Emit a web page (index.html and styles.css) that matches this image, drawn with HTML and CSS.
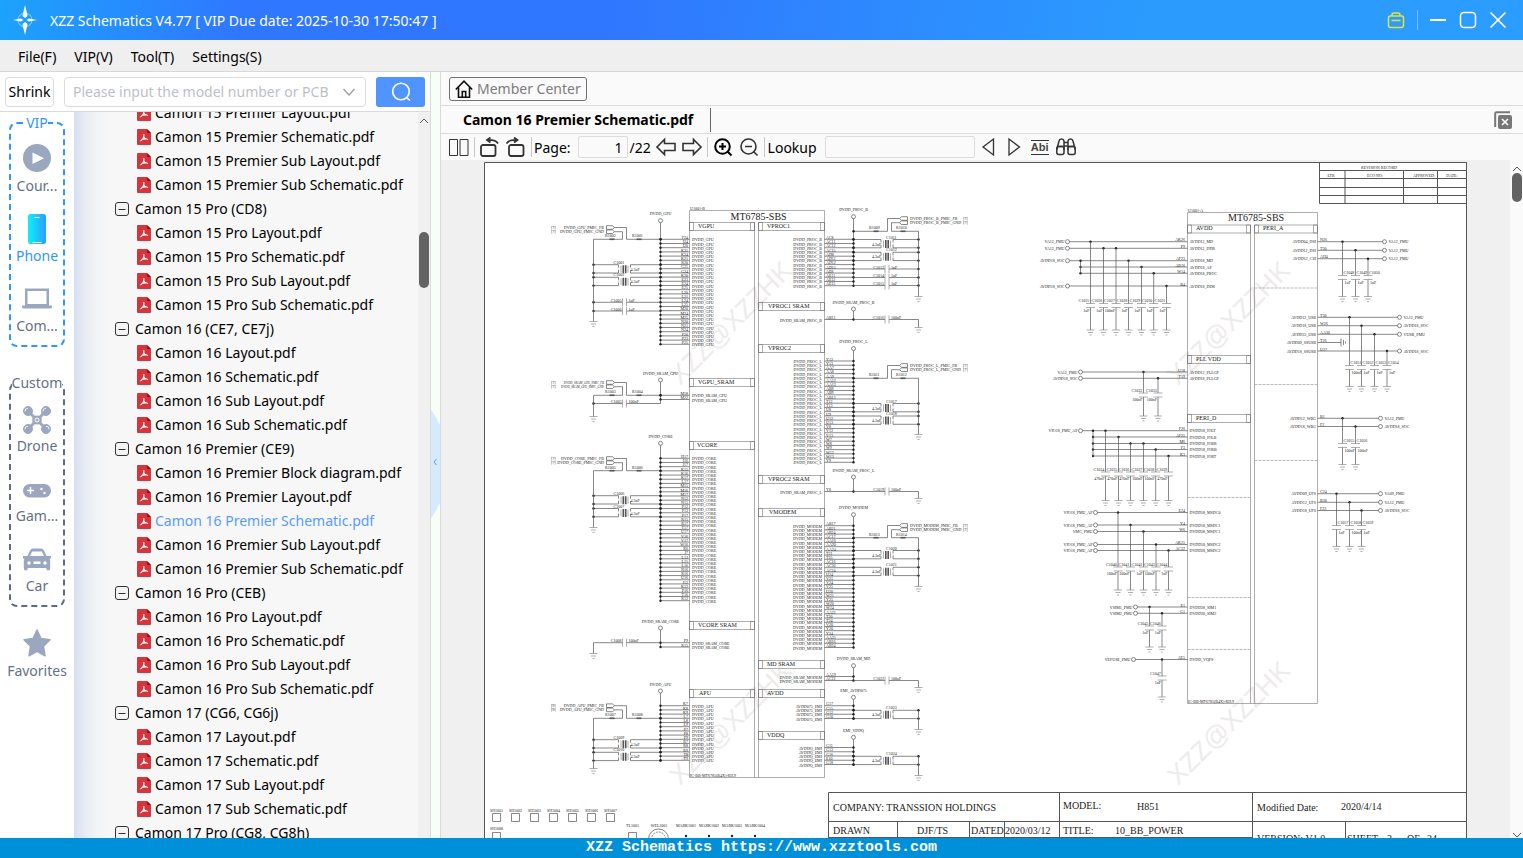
FILE: index.html
```html
<!DOCTYPE html>
<html lang="en">

<head>
  <meta charset="UTF-8">
  <meta name="viewport" content="width=device-width, initial-scale=1.0">
  <title>XZZ Schematics</title>
  <link rel="stylesheet" href="styles.css">
</head>

<body>
  <header class="titlebar">
    <svg class="logo" viewBox="0 0 24 30">
      <circle cx="12" cy="15" r="7" fill="none" stroke="#8fd0ff" stroke-width="1" />
      <path d="M12 0l2.600 11-2.600 2-2.600-2zM12 30l2.600-11-2.600-2-2.600 2zM0 15l8-1.500 2.500 1.500-2.500 1.500zM24 15l-8-1.500-2.500 1.500 2.500 1.500z" fill="#fff" />
    </svg>
    <span class="title">XZZ Schematics V4.77 [ VIP Due date: 2025-10-30 17:50:47 ]</span>
    <div class="window-buttons">
      <button class="win" aria-label="Toolbox">
        <svg width="18" height="18" viewBox="0 0 18 18" fill="none" stroke="#e2e43c" stroke-width="1.500">
          <rect x="1.500" y="5" width="15" height="11.500" rx="2" />
          <path d="M5 5V4q0-2 2-2h4q2 0 2 2v1M4.500 9.500h9" />
        </svg>
      </button>
      <span class="win-line"></span>
      <button class="win" aria-label="Minimize">
        <svg width="18" height="18" viewBox="0 0 18 18"><path d="M1 9h16" stroke="#fff" stroke-width="2" /></svg>
      </button>
      <button class="win" aria-label="Maximize">
        <svg width="18" height="18" viewBox="0 0 18 18"><rect x="1.500" y="1.500" width="15" height="15" rx="3.500" fill="none" stroke="#fff" stroke-width="1.500" /></svg>
      </button>
      <button class="win" aria-label="Close">
        <svg width="18" height="18" viewBox="0 0 18 18"><path d="M1.500 1.500l15 15M16.500 1.500l-15 15" stroke="#fff" stroke-width="1.700" /></svg>
      </button>
    </div>
  </header>

  <nav class="menu">
    <button>File(F)</button>
    <button>VIP(V)</button>
    <button>Tool(T)</button>
    <button>Settings(S)</button>
  </nav>

  <main class="main">
    <section class="left">
      <form class="search">
        <button type="button" class="shrink">Shrink</button>
        <div class="combo">
          <input type="text" aria-label="Model number" placeholder="Please input the model number or PCB">
          <svg width="14" height="14" viewBox="0 0 14 14"><path d="M1.500 4L7 10l5.500-6" fill="none" stroke="#9a9fa8" stroke-width="1.400" /></svg>
        </div>
        <button type="button" class="go" aria-label="Search">
          <svg width="20" height="20" viewBox="0 0 20 20" fill="none" stroke="#fff" stroke-width="1.600">
            <circle cx="10" cy="9.500" r="8.300" />
            <path d="M15.500 15.500l3.500 3" />
          </svg>
        </button>
      </form>

      <div class="browser">
        <nav class="side">
          <fieldset class="group vip">
            <legend>VIP</legend>
            <a class="item" href="#course">
              <svg viewBox="0 0 28 28"><circle cx="14" cy="14" r="14" /><path d="M9.500 8.500v11.500l11.500-5.700z" fill="#fff" /></svg>
              Cour...
            </a>
            <a class="item on" href="#phone">
              <svg viewBox="0 0 28 28">
                <defs>
                  <linearGradient id="ph"><stop offset="0" stop-color="#0ff0fb" /><stop offset="1" stop-color="#2b9dfb" /></linearGradient>
                </defs>
                <rect x="5" y="0" width="18" height="30" rx="2.500" fill="url(#ph)" />
                <path d="M11.500 3.500h5M9.500 28.500h9" stroke="#fff" stroke-width="1" />
              </svg>
              Phone
            </a>
            <a class="item" href="#computer">
              <svg viewBox="0 0 28 28">
                <path d="M2 4.500h24v18H2zM4.500 7v13h19V7z" fill-rule="evenodd" />
                <path d="M-1 21.500h30v1.500q0 1.500-2 1.500H1q-2 0-2-1.500z" />
              </svg>
              Com...
            </a>
          </fieldset>

          <fieldset class="group custom">
            <legend>Custom</legend>
            <a class="item" href="#drone">
              <svg viewBox="0 0 28 28">
                <path d="M5 5l6 6v6l-6 6M23 5l-6 6v6l6 6" fill="none" stroke="#9ba7bf" stroke-width="3" />
                <circle cx="14" cy="14" r="4.500" />
                <circle cx="14" cy="14" r="2" fill="none" stroke="#fff" stroke-width="1" />
                <g stroke="#9ba7bf" stroke-width="1">
                  <circle cx="5" cy="5" r="4.500" /><circle cx="23" cy="5" r="4.500" />
                  <circle cx="5" cy="23" r="4.500" /><circle cx="23" cy="23" r="4.500" />
                </g>
                <path d="M2 5.500a3 3 0 0 1 3-3.300M20 5.500a3 3 0 0 1 3-3.300M2 23.500a3 3 0 0 1 3-3.300M26 23.500a3 3 0 0 0-3-3.300" fill="none" stroke="#fff" stroke-width=".8" />
              </svg>
              Drone
            </a>
            <a class="item" href="#game">
              <svg viewBox="0 0 28 28">
                <rect x="0" y="8" width="28" height="13.500" rx="6.500" />
                <path d="M4 14.500h7M7.500 11v7" stroke="#fff" stroke-width="1.500" />
                <circle cx="18.500" cy="13" r="1.200" fill="#fff" /><circle cx="21.500" cy="17" r="1.200" fill="#fff" />
              </svg>
              Gam...
            </a>
            <a class="item" href="#car">
              <svg viewBox="0 0 28 28">
                <path d="M4.500 10L7 4.500Q8 2.500 10 2.500h8q2 0 3 2L23.500 10H28v2.500h-1.500q.700 1 .700 3V22q0 2.500-2 2.500t-2-2.500H4.800q0 2.500-2 2.500t-2-2.500v-6.500q0-2 .700-3H0V10zM7 10h14l-2.200-4.500h-9.600z" fill-rule="evenodd" />
                <path d="M10.500 15.500h7v2.500h-7z" fill="#fff" />
                <circle cx="6" cy="17" r="1.700" fill="#fff" /><circle cx="22" cy="17" r="1.700" fill="#fff" />
              </svg>
              Car
            </a>
          </fieldset>

          <a class="item favorites" href="#favorites">
            <svg viewBox="0 0 28 28"><path d="M14 1l4 8.500 9 1.200-6.500 6.600 1.500 9.500-8-4.500-8 4.500 1.500-9.500L1 10.700l9-1.200z" stroke="#9ba7bf" stroke-width="1.500" stroke-linejoin="round" /></svg>
            Favorites
          </a>
        </nav>

        <div class="tree">
          <ul id="tree"></ul>
        </div>
        <div class="scroll tree-scroll">
          <svg class="caret" viewBox="0 0 10 6"><path d="M1 5l4-4 4 4" /></svg>
          <span class="thumb"></span>
        </div>
      </div>
    </section>

    <div class="splitter">
      <button class="handle" aria-label="Collapse">
        <svg width="9" height="110" viewBox="0 0 9 110">
          <path d="M0 0l9 16v78L0 110z" fill="#d6eafd" />
          <path d="M5.500 50L3 53l2.500 3" fill="none" stroke="#5aa2e8" stroke-width="1" />
        </svg>
      </button>
    </div>

    <section class="right">
      <div class="member-row">
        <button class="member">
          <svg width="18" height="18" viewBox="0 0 18 18" fill="none" stroke="#111" stroke-width="1.600">
            <path d="M.800 9.500L9 1.200l8.200 8.300M3.500 7.500v9.700h11V7.500M7.300 17v-5.500h3.400V17" />
          </svg>
          Member Center
        </button>
      </div>

      <div class="tabs">
        <button class="tab">Camon 16 Premier Schematic.pdf</button>
        <button class="close-all" aria-label="Close all">
          <svg width="18" height="18" viewBox="0 0 18 18">
            <path d="M1.200 16V2.500q0-1.300 1.300-1.300H16" fill="none" stroke="#777" stroke-width="2" />
            <rect x="4" y="4" width="14" height="14" rx="2" fill="#777" />
            <path d="M8 8l6 6M14 8l-6 6" stroke="#fff" stroke-width="1.600" />
          </svg>
        </button>
      </div>

      <div class="toolbar">
        <button class="tool" aria-label="Two pages">
          <svg viewBox="0 0 20 20"><path d="M.500 2.500h8v16h-8zM11 2.500h8v16h-8z" /></svg>
        </button>
        <span class="sep"></span>
        <button class="tool" aria-label="Rotate left">
          <svg viewBox="0 0 20 20" stroke-width="1.800"><rect x="1" y="8" width="14.500" height="11" rx="2" /><path d="M18 6.500Q15.500 2.500 7.500 3M10.500 .500L7 3l3.500 2.500" /></svg>
        </button>
        <button class="tool" aria-label="Rotate right">
          <svg viewBox="0 0 20 20" stroke-width="1.800"><rect x="3" y="8" width="14.500" height="11" rx="2" /><path d="M.500 6.500Q3 2.500 11 3M8 .500L11.500 3 8 5.500" /></svg>
        </button>
        <span class="sep"></span>
        <label for="page">Page:</label>
        <input id="page" class="page" type="text" value="1">
        <span class="total">/22</span>
        <button class="tool" aria-label="Previous page">
          <svg viewBox="0 0 20 20" stroke-width="1.600"><path d="M1 10l7.500-7.500v4H19v7H8.500v4z" /></svg>
        </button>
        <button class="tool" aria-label="Next page">
          <svg viewBox="0 0 20 20" stroke-width="1.600"><path d="M19 10l-7.500-7.500v4H1v7h10.500v4z" /></svg>
        </button>
        <span class="sep"></span>
        <button class="tool strong" aria-label="Zoom in">
          <svg viewBox="0 0 20 20"><circle cx="9.500" cy="9.500" r="7.300" /><path d="M14.500 14.500l4 4M6 9.500h7M9.500 6v7" /></svg>
        </button>
        <button class="tool" aria-label="Zoom out">
          <svg viewBox="0 0 20 20" stroke-width="1.600"><circle cx="9.500" cy="9.500" r="7.500" /><path d="M14.500 14.500l4 4M6 9.500h7" /></svg>
        </button>
        <span class="sep"></span>
        <label for="lookup">Lookup</label>
        <input id="lookup" class="lookup" type="text">
        <button class="tool" aria-label="Find previous">
          <svg viewBox="0 0 20 20" stroke-width="1.300"><path d="M15.500 2v16L5 10z" /></svg>
        </button>
        <button class="tool" aria-label="Find next">
          <svg viewBox="0 0 20 20" stroke-width="1.300"><path d="M5 2v16l10.500-8z" /></svg>
        </button>
        <button class="tool abi">Abi</button>
        <button class="tool" aria-label="Find">
          <svg viewBox="0 0 20 20" stroke-width="1.500">
            <path d="M.800 12.500L3 4q.400-2 2.500-2T8 4v9M12 13V4q.400-2 2.500-2T17 4l2.200 8.500M8 5.500h4M8 9h4M2 9.500h6M12 9.500h6" />
            <rect x=".8" y="9.500" width="7.200" height="8" rx="2" /><rect x="12" y="9.500" width="7.200" height="8" rx="2" />
          </svg>
        </button>
      </div>

      <div class="viewer">
        <div class="canvas">
          <svg id="sheet" class="sheet" viewBox="484 162 983 690"></svg>
        </div>
        <div class="scroll page-scroll">
          <svg class="caret" viewBox="0 0 10 6"><path d="M1 5l4-4 4 4" /></svg>
          <span class="thumb"></span>
          <svg class="caret down" viewBox="0 0 10 6"><path d="M1 1l4 4 4-4" /></svg>
        </div>
      </div>
    </section>
  </main>

  <footer class="status">XZZ Schematics https://www.xzztools.com</footer>

  <script src="script.js"></script>
</body>

</html>
```

FILE: styles.css
```css
html {
  box-sizing: border-box;
  font-family: "Noto Sans", "Open Sans", sans-serif;
  font-size: 14px;
}

*,
*::before,
*::after {
  box-sizing: inherit;
}

body {
  display: flex;
  flex-direction: column;
  height: 100vh;
  margin: 0;
  overflow: hidden;
  color: #000;
  background-color: #fafafa;
}

button,
input {
  font: inherit;
  color: inherit;
}

button {
  padding: 0;
  border: 0;
  background: none;
}

a {
  color: inherit;
  text-decoration: none;
}

svg {
  display: block;
  flex: none;
}

/* title bar */
.titlebar {
  display: flex;
  align-items: center;
  flex: none;
  height: 40px;
  padding: 0 16px 0 13px;
  color: #fff;
  background: linear-gradient(100deg, #1ca3fb 0, #3077ff 16%, #3077ff 40%, #2b9bfe 75%, #2b9dfe 100%);
}

.logo {
  width: 24px;
  height: 30px;
}

.title {
  margin-left: 13px;
}

.window-buttons {
  display: flex;
  align-items: center;
  gap: 12px;
  margin-left: auto;
}

.win-line {
  width: 1px;
  height: 20px;
  margin-right: -1px;
  background-color: #7fc3ff;
}

/* menu */
.menu {
  display: flex;
  align-items: center;
  flex: none;
  gap: 18px;
  height: 32px;
  padding: 2px 18px 0;
  border-bottom: 1px solid #d9d9d9;
  background-color: #efefef;
}

.main {
  display: flex;
  flex: 1;
  min-height: 0;
}

/* left panel */
.left {
  display: flex;
  flex-direction: column;
  flex: none;
  width: 431px;
  border-right: 1px solid #dadada;
  background-color: #fff;
}

.search {
  display: flex;
  align-items: center;
  flex: none;
  gap: 10px;
  height: 40px;
  padding: 0 5px;
  border-bottom: 1px solid #dadada;
}

.shrink {
  width: 49px;
  height: 30px;
  border: 1px solid #dadada;
  border-radius: 4px;
}

.combo {
  display: flex;
  align-items: center;
  flex: 1;
  min-width: 0;
  height: 30px;
  padding: 0 9px 0 8px;
  border: 1px solid #dadada;
  border-radius: 4px;
}

.combo input {
  flex: 1;
  min-width: 0;
  padding: 0;
  border: 0;
  background: none;
}

.combo input::placeholder {
  color: #bcbfc6;
}

.go {
  display: flex;
  align-items: center;
  justify-content: center;
  width: 49px;
  height: 30px;
  border-radius: 3px;
  background-color: #5094ff;
}

.browser {
  display: flex;
  flex: 1;
  min-height: 0;
}

.side {
  flex: none;
  width: 74px;
  padding: 2px 9px 0;
  overflow: hidden;
  color: #667085;
}

.group {
  min-width: 0;
  margin: 0 0 27px;
  padding: 0 0 3px;
  border: 2px dashed #5f6b80;
  border-radius: 8px;
}

.group legend {
  margin: 0 auto;
  padding: 0;
  line-height: 18px;
}

.vip {
  border-color: #2f97f7;
}

.vip legend,
.on {
  color: #2f97f7;
}

.item {
  display: flex;
  flex-direction: column;
  align-items: center;
  gap: 4px;
  height: 70px;
  padding-top: 12px;
  line-height: 20px;
  white-space: nowrap;
}

.item svg {
  width: 28px;
  height: 28px;
  fill: #9ba7bf;
  overflow: visible;
}

.custom .item {
  gap: 2px;
  padding-top: 14px;
}

.favorites {
  margin-top: -17px;
}

.tree {
  flex: 1;
  min-width: 0;
  overflow: hidden;
  background: linear-gradient(90deg, #d6e0f1 0, #e9ecf2 12px, #f3f4f6 24px, #f7f7f7 36px);
}

/* list is scrolled half a row down */
.tree ul {
  margin: -11px 0 0;
  padding: 0;
  list-style: none;
}

.tree li {
  display: flex;
  align-items: center;
  height: 24px;
  line-height: 24px;
  white-space: nowrap;
}

.folder {
  gap: 6px;
  padding-left: 41px;
}

.file {
  gap: 4px;
  padding-left: 63px;
}

.selected {
  color: #5a9bff;
}

/* scroll bars */
.scroll {
  display: flex;
  flex-direction: column;
  align-items: center;
  flex: none;
}

.caret {
  width: 10px;
  height: 6px;
  fill: none;
  stroke: #555;
}

.thumb {
  width: 10px;
  border-radius: 5px;
  background-color: #636363;
}

.tree-scroll {
  width: 12px;
  padding-top: 6px;
  background-color: #f0f0f0;
}

.tree-scroll .thumb {
  height: 56px;
  margin-top: 108px;
}

.page-scroll {
  width: 13px;
  padding-top: 6px;
}

.page-scroll .thumb {
  height: 29px;
  margin-top: 1px;
}

.down {
  margin-top: auto;
}

/* splitter */
.splitter {
  display: flex;
  align-items: center;
  flex: none;
  width: 10px;
  padding-top: 18px;
  border-right: 1px solid #dadada;
  background-color: #f7fdf7;
}

/* right panel */
.right {
  display: flex;
  flex-direction: column;
  flex: 1;
  min-width: 0;
}

.member-row {
  display: flex;
  align-items: center;
  flex: none;
  height: 34px;
  padding-left: 8px;
  border-bottom: 1px solid #dadada;
}

.member {
  display: flex;
  align-items: center;
  gap: 4px;
  height: 24px;
  padding: 0 5px;
  border: 1px solid #707070;
  border-radius: 3px;
  color: #7d7d7d;
}

.tabs {
  display: flex;
  align-items: center;
  justify-content: space-between;
  flex: none;
  height: 28px;
  padding-right: 11px;
  border-bottom: 1px solid #dadada;
}

.tab {
  height: 24px;
  padding: 0 17px 0 22px;
  border-right: 1px solid #666;
  font-weight: bold;
}

.toolbar {
  display: flex;
  align-items: center;
  flex: none;
  height: 26px;
  padding-left: 5px;
}

.tool {
  display: flex;
  justify-content: center;
  width: 26px;
}

.tool svg {
  width: 20px;
  height: 20px;
  fill: none;
  stroke: #333;
}

.strong svg {
  stroke: #000;
  stroke-width: 2;
}

.sep {
  width: 1px;
  height: 20px;
  margin: 0 2px;
  background-color: #c8c8c8;
}

.toolbar input {
  height: 22px;
  border: 1px solid #dcdcdc;
  border-radius: 2px;
  background: none;
}

.page {
  width: 50px;
  margin: 0 2px 0 7px;
  padding: 0 4px;
  text-align: right;
}

.toolbar .lookup {
  width: 150px;
  margin-left: 8px;
}

.total {
  width: 23px;
}

.toolbar label[for="lookup"] {
  margin-left: 1px;
}

.abi {
  width: 18px;
  margin: 0 4px;
  border-top: 1px solid #333;
  border-bottom: 1px solid #333;
  font: bold 11px/13px "Liberation Sans", sans-serif;
  color: #444;
}

.viewer {
  display: flex;
  flex: 1;
  min-height: 0;
}

.canvas {
  flex: 1;
  min-width: 0;
  padding: 2px 43px 0;
  overflow: hidden;
  background-color: #f0f0f0;
}

/* schematic sheet */
.sheet {
  width: 100%;
  height: auto;
  background-color: #fff;
  fill: #222;
  font-family: "Liberation Serif", serif;
}

.sheet .wire {
  fill: none;
  stroke: #555;
  stroke-width: .7;
}

.sheet .thin {
  fill: none;
  stroke: #777;
  stroke-width: .6;
}

.sheet .dash {
  stroke: #aaa;
  stroke-width: .8;
  stroke-dasharray: 3 1;
}

.sheet .fat {
  stroke: #555;
  stroke-width: 1.6;
}

.sheet .frame {
  fill: none;
  stroke: #555;
  stroke-width: 1;
}

.sheet .node {
  fill: #222;
}

.sheet .mark {
  font-family: "Liberation Sans", sans-serif;
  fill: #eeebeb;
}

/* status bar */
.status {
  flex: none;
  height: 20px;
  color: #fff;
  background-color: #0090da;
  font: bold 15px/20px "Liberation Mono", monospace;
  text-align: center;
}
```

FILE: script.js
```js
const d = document,
  $tree = d.getElementById("tree"),
  $sheet = d.getElementById("sheet");

/* ---------- file tree ---------- */
const PARTS = ["Layout", "Schematic", "Sub Layout", "Sub Schematic"];
const folders = [
  { base: "Camon 15 Premier", parts: PARTS },
  { name: "Camon 15 Pro (CD8)", base: "Camon 15 Pro", parts: PARTS },
  { name: "Camon 16 (CE7, CE7j)", base: "Camon 16", parts: PARTS },
  { name: "Camon 16 Premier (CE9)", base: "Camon 16 Premier", parts: ["Block diagram", ...PARTS] },
  { name: "Camon 16 Pro (CEB)", base: "Camon 16 Pro", parts: PARTS },
  { name: "Camon 17 (CG6, CG6j)", base: "Camon 17", parts: PARTS },
  { name: "Camon 17 Pro (CG8, CG8h)", base: "Camon 17 Pro", parts: [] }
];
const current = "Camon 16 Premier Schematic.pdf";

const minusIcon = `<svg width="14" height="14" viewBox="0 0 14 14" fill="#f3f3f3" stroke="#333">
  <rect x=".5" y=".5" width="13" height="13" rx="2.5"/><path d="M3.500 7.500h7"/></svg>`;
const pdfIcon = `<svg width="14" height="16" viewBox="0 0 14 16">
  <path d="M1 0h9l4 4v11q0 1-1 1H1q-1 0-1-1V1q0-1 1-1z" fill="#d2363f"/>
  <path d="M10 0l4 4h-4z" fill="#8f1219"/>
  <path d="M6.800 5v2.500q0 2-3.300 4.500M6.800 8q1 2 4.200 2.500M5.500 10.300l4-.500" fill="none" stroke="#fff" stroke-width="1.100"/></svg>`;

folders.forEach(f => {
  let rows = f.name ? `<li class="folder"><button aria-label="Collapse">${minusIcon}</button>${f.name}</li>` : "";
  f.parts.forEach(p => {
    const file = `${f.base} ${p}.pdf`;
    rows += `<li class="file${file === current ? " selected" : ""}">${pdfIcon}<a href="#">${file}</a></li>`;
  });
  $tree.innerHTML += rows;
});

/* ---------- schematic sheet ---------- */
let out = "";
const path = (p, cls = "wire") => out += `<path class="${cls}" d="${p}"/>`;
const text = (x, y, s, size = 4, anchor = "start") =>
  out += `<text x="${x}" y="${y}" font-size="${size}" text-anchor="${anchor}">${s}</text>`;
const dot = (x, y) => out += `<circle class="node" cx="${x}" cy="${y}" r="1.2"/>`;
const ring = (x, y) => out += `<circle class="wire" cx="${x}" cy="${y}" r="2"/>`;
const box = (x, y, w, h, cls = "thin") => path(`M${x} ${y}h${w}v${h}h${-w}z`, cls);
const ground = (x, y) => path(`M${x - 4} ${y}h8M${x - 2.5} ${y + 2.500}h5M${x - 1} ${y + 5}h2`, "thin");

function watermark(x, y) {
  out += `<text class="mark" x="${x}" y="${y}" font-size="26" transform="rotate(-45 ${x} ${y})">XZZ@XZZHK</text>`;
}

function section(x, y, w, label, tx) {
  box(x, y, w, 8);
  box(x, y, 4, 8);
  box(x + w - 4, y, 4, 8);
  text(tx, y + 5, label, 6);
}

// electrolytic between two rows, plates in the middle
function bigCap(x1, x2, cx, y, name, flip) {
  path(`M${x1} ${y}H${cx - 6}v3M${cx + 6} ${y + 3}V${y}H${x2}M${x1} ${y + 8.300}H${cx - 6}v-3M${cx + 6} ${y + 5.300}v3H${x2}`);
  path(`M${cx - 1.200} ${y + .500}v8M${cx + 1.200} ${y + .500}v8`, "fat");
  path(`M${cx - 3.500} ${y + 1}v7M${cx + 3.500} ${y + 1}v7`, "thin");
  text(flip ? cx - 1 : cx - 11, y - 1, name);
  text(flip ? cx - 15 : cx + 6, y + 6, "4.3uF");
  text(flip ? cx + 5 : cx - 7, y + 6, "+");
  [x1, x2].forEach(x => { dot(x, y); dot(x, y + 8.300); });
}

function smallCap(x1, x2, cx, y, name, value) {
  path(`M${x1} ${y}H${cx - 2}M${cx + 2} ${y}H${x2}`);
  path(`M${cx - 2} ${y - 4}v8M${cx + 2} ${y - 4}v8`, "thin");
  text(cx - 3, y - .500, name, 4, "end");
  text(cx + 4, y - .500, value);
}

function resistor(x, y, name) {
  path(`M${x - 2.500} ${y}h5`, "fat");
  text(x - 7, y - 2, name);
}

// rail with its pins on the left or right edge of chip B
function bank(side, o) {
  const left = side === "left", rail = left ? 660.5 : 853.5, edge = left ? 689.5 : 824.5;
  const step = o.rows.length > 1 ? (o.to - o.from) / (o.rows.length - 1) : 0;
  ring(rail, o.ring);
  text(rail, o.ring - 5.500, o.rail || o.net, 4, "middle");
  path(`M${rail} ${o.ring + 2}V${o.to}`);
  o.rows.forEach((pin, i) => {
    const y = o.from + i * step;
    path(`M${rail} ${y}H${edge}`);
    dot(rail, y);
    if (left) {
      text(688, y - .300, pin, 4, "end");
      text(692, y + 2, o.net);
    } else {
      text(826, y - .300, pin);
      text(822, y + 2, o.net, 4, "end");
    }
  });
}

// remote sense pair going off sheet
function sense(side, y, row, net, r1, r2, page = 7) {
  const size = net.length > 12 ? 3 : 4;
  if (side === "left") {
    path(`M606.500 ${y - 1.800}h6l2 1.800-2 1.800h-6zM606.500 ${y + 2.400}h6l2 1.800-2 1.800h-6zM614.500 ${y}H626.500V${row}H660.500M614.500 ${y + 4.200}H622.500V${row}H593.500`);
    text(604, y + 1, `${net}_PMIC_FB`, size, "end");
    text(604, y + 5.500, `${net}_PMIC_GND`, size, "end");
    [0, 4.5].forEach(k => text(551, y + 1 + k, `[${page}]`));
    resistor(612, row, r1);
    resistor(639, row, r2);
    dot(660.5, row);
  } else {
    path(`M907.500 ${y - 1.800}h-6l-2 1.800 2 1.800h6zM907.500 ${y + 2.400}h-6l-2 1.800 2 1.800h6zM899.500 ${y}H887.500V${row}H853.500M899.500 ${y + 4.200}H891.500V${row}H918.500`);
    text(910, y + 1, `${net}_PMIC_FB`, size);
    text(910, y + 5.500, `${net}_PMIC_GND`, size);
    [0, 4.5].forEach(k => text(963, y + 1 + k, `[${page}]`));
    resistor(876, row, r1);
    resistor(903, row, r2);
    dot(853.5, row);
  }
}

// ground column
function drop(x, y1, y2) {
  path(`M${x} ${y1}V${y2}`);
  ground(x, y2);
}

watermark(680, 386);
watermark(1178, 386);
watermark(680, 786);
watermark(1178, 786);
text(730.5, 220, "MT6785-SBS", 10);
text(1228, 221, "MT6785-SBS", 10);

// chip B
box(689.5, 210.5, 135, 567);
path("M754.500 222.500V777.500M758.500 222.500V777.500", "thin");
text(690, 210, "U1001-B");
text(690, 777, "IC-BB-MT6785(B4X)-RH.9");
[[222.5, "VGPU", 698], [378.5, "VGPU_SRAM", 698], [441.5, "VCORE", 697], [621.5, "VCORE SRAM", 698], [689.5, "APU", 699]]
  .forEach(s => section(689.5, s[0], 65, s[1], s[2]));
[[222.5, "VPROC1", 767], [302.5, "VPROC1 SRAM", 768], [344.5, "VPROC2", 768], [475.5, "VPROC2 SRAM", 768],
[508.5, "VMODEM", 769], [660.5, "MD SRAM", 767], [689.5, "AVDD", 767], [731.5, "VDDQ", 767]]
  .forEach(s => section(758.5, s[0], 66, s[1], s[2]));

bank("left", { net: "DVDD_GPU", ring: 220.7, from: 239.3, to: 344.3, rows: "F24 I24 I20 K25 K24 K21 R20 G25 G24 K20 E23 E24 E25 L20 L21 L24 L25 M20 M24 M25 N20 N21 N24 P20 P23 P25".split(" ") });
bank("left", { net: "DVDD_SRAM_GPU", ring: 380, from: 395.3, to: 399.5, rows: ["M18", "M22"] });
bank("left", { net: "DVDD_CORE", ring: 443.3, from: 458.3, to: 600.7, rows: "H17 I16 J17 K15 K16 K17 L17 M15 M16 M17 N12 N15 P12 P13 P17 R15 R17 T17 U17 V16 V17 W16 R6 J7 L12 L15 L16 N16 R16 U16 J12 K12 P16 T16 R12".split(" ") });
bank("left", { net: "DVDD_SRAM_CORE", ring: 628, from: 642.7, to: 647, rows: ["P9", "R15"] });
bank("left", { net: "DVDD_APU", ring: 691, from: 705.7, to: 760.3, rows: "K7 K8 K9 L7 L8 L9 P7 P8 P9 R7 R8 R9 T8 T9".split(" ") });

sense("left", 227.5, 239.3, "DVDD_GPU", "R1002", "R1001");
bigCap(593.5, 660.5, 624.5, 264.7, "C1001");
bigCap(593.5, 660.5, 624.5, 277.3, "C1002");
smallCap(593.5, 660.5, 624.5, 302.3, "C1005", "1uF");
smallCap(593.5, 660.5, 624.5, 311, "C1006", "1uF");
dot(593.5, 302.3);
dot(593.5, 311);
drop(593.5, 239.3, 321.5);
sense("left", 382.5, 395.3, "DVDD_SRAM_GPU", "R1003", "R1004");
smallCap(593.5, 660.5, 624.5, 403.5, "C1003", "100nF");
path("M660.500 399.500v4");
dot(593.5, 403.5);
drop(593.5, 395.3, 416.5);
sense("left", 458.5, 470.7, "DVDD_CORE", "R1005", "R1006");
bigCap(593.5, 660.5, 624.5, 495.7, "C1006");
bigCap(593.5, 660.5, 624.5, 508.5, "C1007");
drop(593.5, 470.7, 527.5);
smallCap(593.5, 660.5, 624.5, 642.7, "C1008", "100nF");
drop(593.5, 642.7, 653.5);
sense("left", 705.7, 718.3, "DVDD_APU", "R1007", "R1008", 9);
bigCap(593.5, 660.5, 624.5, 739.7, "C1009");
bigCap(593.5, 660.5, 624.5, 752.3, "C1010");
drop(593.5, 718.3, 768.5);

bank("right", { net: "DVDD_PROC_B", ring: 216.7, from: 239.3, to: 285.7, rows: "AC8 AC11 AC12 AC15 AD8 AD11 AD12 AD15 AE8 AE11 AE12 AE15".split(" ") });
bank("right", { net: "DVDD_SRAM_PROC_B", ring: 309, from: 319.5, to: 319.5, rows: ["AB11"] });
bank("right", { net: "DVDD_PROC_L", ring: 348.5, from: 361, to: 462.3, rows: "Y12 Y13 AA7 AA8 AA9 AA12 AA13 AB8 AB9 AB13 T12 T13 U8 U9 U12 U13 V8 V12 V13 W7 W8 W9 W12 W13 Y9".split(" ") });
bank("right", { net: "DVDD_SRAM_PROC_L", ring: 477, from: 491.5, to: 491.5, rows: ["Y8"] });
bank("right", { net: "DVDD_MODEM", ring: 514.7, from: 525.7, to: 647.5, rows: "AB17 AB21 AB24 AC17 AA16 AA20 AA24 T21 T25 AC16 AC20 AC24 U24 V21 V24 V25 U20 W21 Y25 W20 W24 AA21 T20 T24 V20 Y20 Y24 AA25 AB16 AB24".split(" ") });
bank("right", { net: "DVDD_SRAM_MODEM", rail: "DVDD_SRAM_MD", ring: 665.7, from: 676.5, to: 680.5, rows: ["AA19", "AC22"] });
bank("right", { net: "AVDD075_EMI", rail: "EMI_AVDD075", ring: 697.3, from: 705.7, to: 718.5, rows: ["G17", "G15", "G12", "G10"] });
bank("right", { net: "AVDDQ_EMI", rail: "EMI_VDDQ", ring: 737.3, from: 747.5, to: 764.5, rows: ["G11", "G13", "G16", "E10", "G18"] });

sense("right", 218.5, 231.3, "DVDD_PROC_B", "R1009", "R1010");
bigCap(853.5, 918.5, 887, 239.5, "C1011", true);
bigCap(853.5, 918.5, 887, 252.3, "C1012", true);
[[269, "C1013"], [277.5, "C1014"], [285.5, "C1015"]].forEach(c => { smallCap(853.5, 918.5, 887, c[0], c[1], "1uF"); dot(918.5, c[0]); });
drop(918.5, 231.3, 296.5);
smallCap(853.5, 918.5, 887, 319.5, "C1016", "100nF");
drop(918.5, 319.5, 327.5);
sense("right", 365.5, 378.3, "DVDD_PROC_L", "R1011", "R1012");
bigCap(853.5, 918.5, 887, 403.5, "C1017", true);
bigCap(853.5, 918.5, 887, 416, "C1018", true);
drop(918.5, 378.3, 434.5);
smallCap(853.5, 918.5, 887, 491.5, "C1019", "100nF");
drop(918.5, 491.5, 498.5);
sense("right", 525.5, 537.7, "DVDD_MODEM", "R1013", "R1014");
bigCap(853.5, 918.5, 887, 550.5, "C1020", true);
bigCap(853.5, 918.5, 887, 567.3, "C1021", true);
drop(918.5, 537.7, 586.5);
smallCap(853.5, 918.5, 887, 680.5, "C1022", "100nF");
drop(918.5, 680.5, 687.5);
bigCap(853.5, 918.5, 887, 710.3, "C1023", true);
drop(918.5, 710.3, 729.5);
bigCap(853.5, 918.5, 887, 756.3, "C1024", true);
drop(918.5, 756.3, 775.5);

// chip A
box(1187.5, 212.5, 130, 491);
path("M1250.500 225V703.500M1254.500 225V703.500", "thin");
text(1188, 212, "U1001-A");
text(1188, 703, "IC-BB-MT6785(B4X)-RH.9");
section(1187.5, 225, 63, "AVDD", 1196);
section(1187.5, 355.5, 63, "PLL VDD", 1196);
section(1187.5, 414.5, 63, "PERI_D", 1196);
section(1254.5, 225, 63, "PERI_A", 1263);
path("M1187.500 497.500h63M1187.500 597.500h63M1187.500 649.500h63M1254.500 288h63M1254.500 384.500h63M1254.500 460.500h63", "dash");

// [source, ring x, y, pin, net]
[["VA12_PMU", 1067.5, 241.7, "AK26", "AVDD12_MD"], ["VA12_PMU", 1067.5, 248.3, "P9", "AVDD12_DDR"],
["AVDD18_SOC", 1067.5, 260.7, "AF23", "AVDD18_MD"], ["", 1080.5, 267, "AB16", "AVDD18_AP"],
["", 1080.5, 273.3, "W14", "AVDD18_PROC"], ["AVDD18_SOC", 1067.5, 286, "B4", "AVDD18_DDR"],
["VA12_PMU", 1080.5, 372, "U18", "AVDD12_PLLGP"], ["AVDD18_SOC", 1080.5, 378.3, "T19", "AVDD18_PLLGP"],
["VIO18_PMU_AP", 1080.5, 430.7, "F26", "DVDD18_IOLT"], ["", 1093, 437, "AF25", "DVDD18_IOLB"],
["", 1093, 443.5, "M6", "DVDD18_IOBR"], ["", 1093, 449.5, "F3", "DVDD18_IORB"], ["", 1093, 456, "K3", "DVDD18_IORT"],
["VIO18_PMU_AP", 1095.5, 512.5, "E24", "DVDD18_MSDC0"], ["VIO18_PMU_AP", 1095.5, 525, "Y4", "DVDD18_MSDC1"],
["VMC_PMU", 1095.5, 531.5, "W6", "DVDD28_MSDC1"], ["VIO18_PMU_AP", 1095.5, 544.5, "AK25", "DVDD18_MSDC2"],
["VIO18_PMU_AP", 1095.5, 550.5, "AC22", "DVDD28_MSDC2"], ["VSIM1_PMU", 1135.5, 607, "E1", "DVDD28_SIM1"],
["VSIM2_PMU", 1135.5, 613.3, "G1", "DVDD28_SIM2"], ["VEFUSE_PMU", 1133.5, 659.5, "AE5", "DVDD_VQPS"]
].forEach(([src, x, y, pin, net]) => {
  if (src) {
    ring(x, y);
    text(x - 3, y + 1.5, src, 4, "end");
    path(`M${x + 2} ${y}H1187.500`);
  } else {
    dot(x, y);
    path(`M${x} ${y}H1187.500`);
  }
  text(1185, y - .3, pin, 4, "end");
  text(1189.5, y + 1.5, net);
});
path("M1080.500 260.700V273.300M1093 430.700V456");
dot(1080.5, 260.7);
dot(1093, 430.7);

// [source, ring x, y, pin, net]
[["VA12_PMU", 1384.5, 241.7, "N26", "AVDD04_DSI"], ["VA12_PMU", 1384.5, 250.3, "T30", "AVDD12_DSI"],
["VA12_PMU", 1384.5, 258.7, "AH4", "AVDD12_CSI"], ["VA12_PMU", 1399.5, 317.3, "T30", "AVDD12_USB"],
["AVDD18_SOC", 1399.5, 325.7, "W26", "AVDD18_USB"], ["VUSB_PMU", 1399.5, 334.3, "AA30", "AVDD33_USB"],
["AVDD18_SOC", 1399.5, 351, "U27", "AVDD18_SSUSB"], ["VA12_PMU", 1380.5, 418.3, "B1", "AVDD12_WBG"],
["AVDD18_SOC", 1380.5, 426.5, "F2", "AVDD18_WBG"], ["VA09_PMU", 1380.5, 493.7, "C24", "AVDD09_UFS"],
["VA12_PMU", 1380.5, 502.3, "B30", "AVDD12_UFS"], ["AVDD18_SOC", 1380.5, 510.5, "F23", "AVDD18_UFS"]
].forEach(([src, x, y, pin, net]) => {
  ring(x, y);
  path(`M1317.500 ${y}H${x - 2}`);
  text(x + 4, y + 1.5, src);
  text(1320, y - .3, pin);
  text(1316, y + 1.5, net, 4, "end");
});
path("M1317.500 342.500H1341M1341 338.500v8M1343.500 340v5M1345.500 341.500v2");
text(1320, 342.2, "T26");
text(1316, 344, "AVDD09_SSUSB", 4, "end");

// decoupling columns: cap y, ground y, first number, side of label, [x, start y, value]
[[303.5, 330, 1025, -12, [[1090.5, 241.7, "1uF"], [1103.5, 248.3, "1uF"], [1116, 248.3, "100nF"], [1128.5, 260.7, "1uF"], [1141.5, 267, "1uF"], [1153.7, 273.3, "1uF"], [1166.5, 286, "1uF"]]],
[393, 416, 1032, -12, [[1143.5, 372, "100nF"], [1158, 378.3, "100nF"]]],
[472, 500.5, 1034, -12, [[1105.5, 430.7, "470nF"], [1118.5, 437, "470nF"], [1130.5, 443.5, "470nF"], [1143.5, 443.5, "100nF"], [1155.7, 449.5, "100nF"], [1168.5, 456, "470nF"]]],
[567, 590, 1040, -12, [[1118, 512.5, "100nF"], [1130.5, 525, "100nF"], [1143.5, 531.5, "1uF"], [1156, 544.5, "100nF"], [1168.5, 550.5, "1uF"]]],
[626, 647, 1045, -12, [[1149.5, 607, "1uF"], [1162, 613.3, "1uF"]]],
[676, 697, 1047, -12, [[1162, 659.5, "1uF"]]],
[275.5, 296.5, 1048, 1, [[1342.5, 241.7, "1uF"], [1355.5, 250.3, "1uF"], [1368, 258.7, "1uF"]]],
[365.5, 386.5, 1051, 1, [[1349.5, 317.3, "100nF"], [1361.5, 325.7, "1uF"], [1374.5, 334.3, "1uF"], [1387, 351, "1uF"]]],
[443.5, 464.5, 1055, 1, [[1342.5, 418.3, "100nF"], [1355.5, 426.5, "100nF"]]],
[525.5, 546.5, 1057, 1, [[1336.5, 493.7, "1uF"], [1349.5, 502.3, "100nF"], [1361.5, 510.5, "1uF"]]]
].forEach(([cy, gy, first, dx, cols]) => cols.forEach(([x, y, value], i) => {
  dot(x, y);
  path(`M${x} ${y}V${cy}M${x} ${cy + 4}V${gy}`);
  path(`M${x - 4.500} ${cy}h9M${x - 4.500} ${cy + 4}h9`, "thin");
  text(x + dx, cy - 1.5, `C${first + i}`);
  text(dx < 0 ? x - 1 : x + 2, cy + 8, value, 4, dx < 0 ? "end" : "start");
  ground(x, gy);
}));

// revision record
box(484.5, 162.5, 982, 720, "frame");
box(1319.5, 162.5, 147, 41, "frame");
path("M1319.500 170.500h147M1319.500 178.500h147M1319.500 187.500h147M1319.500 195.500h147M1345 170.500v33M1403.500 170.500v33M1437.500 170.500v33", "frame");
text(1379, 168.5, "REVISION RECORD", 4, "middle");
text(1331, 177, "LTR", 4, "middle");
text(1375, 177, "ECO NO:", 4, "middle");
text(1424, 177, "APPROVED:", 4, "middle");
text(1452, 177, "DATE:", 4, "middle");

// title block
path("M828.500 860V792.500H1466.500M828.500 821.500H1466.500M828.500 837.500H1252.500M1059.500 792.500V860M1252.500 792.500V860M897.500 821.500v16M969.500 821.500v16M1004.500 821.500v16M1345.500 821.500V860", "frame");
[[833, 811, "COMPANY: TRANSSION HOLDINGS"], [1063, 809, "MODEL:"], [1137, 810, "H851"], [1257, 811, "Modified Date:"],
[1341, 810, "2020/4/14"], [833, 834, "DRAWN"], [917, 834, "DJF/TS"], [971, 834, "DATED"], [1005, 834, "2020/03/12"],
[1063, 834, "TITLE:"], [1115, 834, "10_BB_POWER"], [1257, 842, "VERSION: V1.0"], [1347, 842, "SHEET"], [1387, 842, "3"], [1407, 842, "OF"], [1427, 842, "24"]]
  .forEach(t => text(t[0], t[1], t[2], 10));

// shield clips and fiducials
for (let i = 0; i < 7; i++) {
  text(496.5 + i * 19, 811.5, `SH${1001 + i}`, 4, "middle");
  box(492.5 + i * 19, 813.5, 8, 8, "wire");
}
text(496.5, 830, "SH1008", 4, "middle");
box(492.5, 832.5, 8, 8, "wire");
text(632.5, 827, "TL1001", 4, "middle");
box(628.5, 832.5, 8, 8, "wire");
text(659, 827, "WEL1001", 4, "middle");
out += `<circle class="wire" cx="658.500" cy="839" r="10"/><circle class="wire" cx="658.500" cy="839" r="7" stroke-dasharray="2 1"/>`;
for (let i = 0; i < 4; i++) {
  text(686 + i * 23, 827, `MARK${1001 + i}`, 4, "middle");
  dot(686 + i * 23, 836);
}

$sheet.innerHTML = out;
```
